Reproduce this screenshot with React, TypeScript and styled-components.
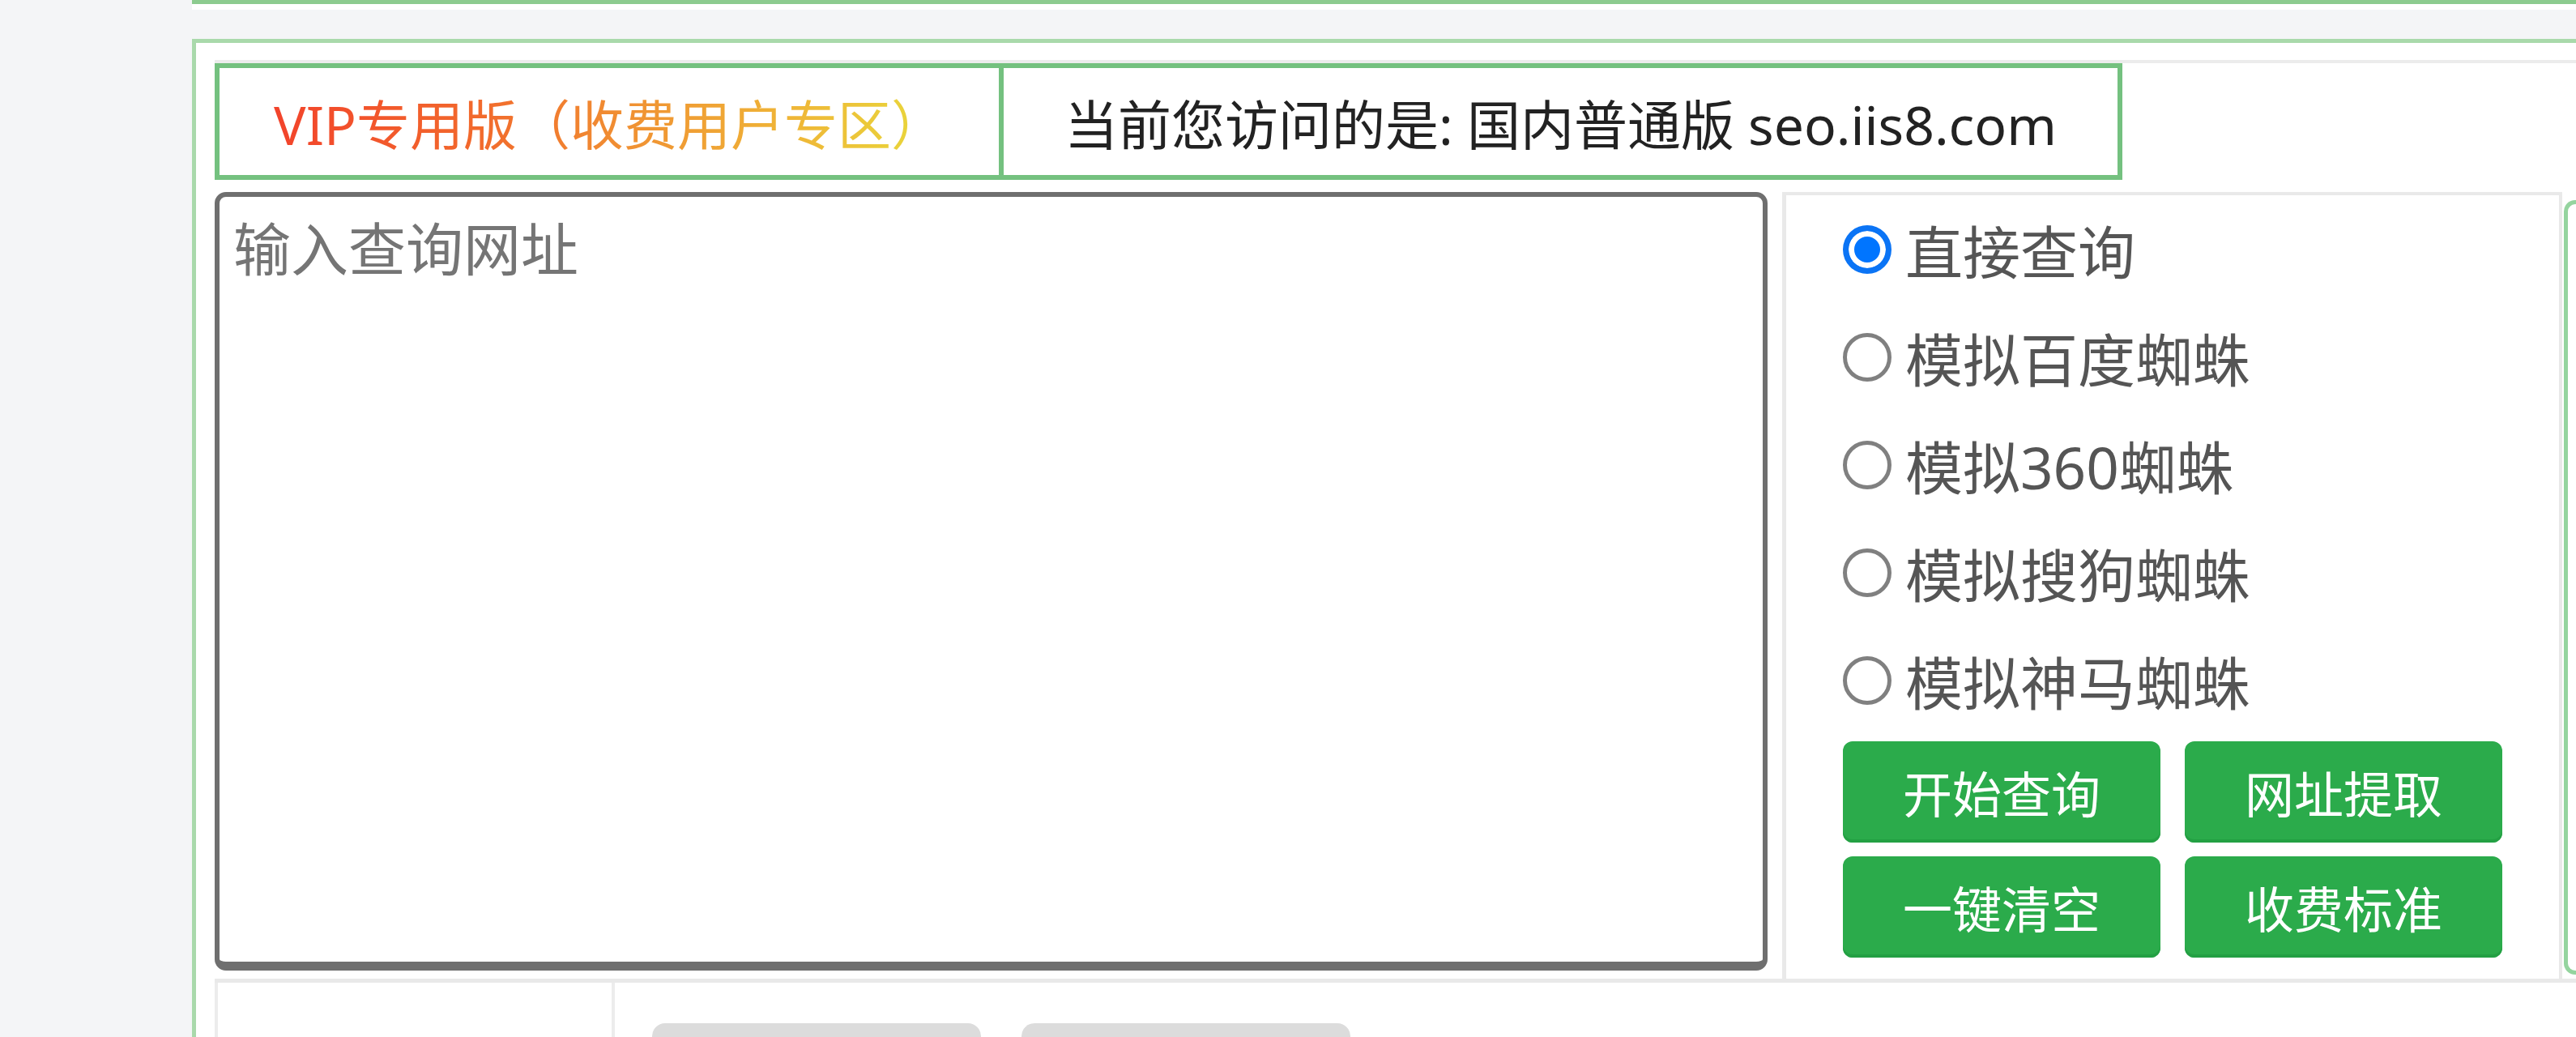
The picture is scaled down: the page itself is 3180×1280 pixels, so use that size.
import React from 'react';
import styled, { createGlobalStyle } from 'styled-components';

const GlobalStyle = createGlobalStyle`
  html, body {
    margin: 0;
    padding: 0;
    background: #f4f5f7;
  }
  body {
    font-family: "Noto Sans", "Noto Sans CJK SC", sans-serif;
    overflow: hidden;
  }
  * {
    box-sizing: border-box;
  }
`;

const Page = styled.div`
  display: flex;
  width: 3180px;
  height: 1280px;
  overflow: hidden;
`;

const Sidebar = styled.aside`
  width: 237px;
  flex-shrink: 0;
`;

const Main = styled.main`
  flex: 1;
  min-width: 0;
`;

const PrevBox = styled.div`
  height: 12px;
  background: #fff;
  border-top: 5px solid #8ccb8f;
`;

const Box = styled.section`
  margin-top: 36px;
  background: #fff;
  border-top: 5px solid #a9d9ab;
  border-left: 5px solid #a9d9ab;
  padding: 21px 0 0 23px;
  height: 1300px;
`;

const TabRow = styled.div`
  display: flex;
  border-top: 4px solid #ececec;
  padding-bottom: 15px;
`;

const Tab = styled.div<{ $width: number; $first?: boolean }>`
  width: ${p => p.$width}px;
  height: 144px;
  border: 6px solid #74c17f;
  border-left-width: ${p => (p.$first ? '6px' : '0')};
  display: flex;
  align-items: center;
  justify-content: center;
  font-size: 66px;
  color: #222;
  white-space: nowrap;
`;

const VipText = styled.span`
  background: linear-gradient(90deg, #f2432b 0%, #f2692c 30%, #f09433 55%, #efb737 78%, #e8dc3c 100%);
  -webkit-background-clip: text;
  background-clip: text;
  color: transparent;
`;

const ContentRow = styled.div`
  display: grid;
  grid-template-columns: 1935px 963px 1fr;
  border-bottom: 5px solid #e9e9e9;
`;

const QueryInput = styled.textarea`
  display: block;
  width: 1917px;
  height: 961px;
  border-style: solid;
  border-color: #6f6f6f;
  border-width: 6px 6px 11px 6px;
  border-radius: 14px;
  padding: 14px 17px;
  font-family: "Noto Sans", "Noto Sans CJK SC", sans-serif;
  font-size: 71px;
  line-height: 1.4;
  color: #333;
  resize: none;
  outline: none;
  &::placeholder {
    color: #757575;
  }
`;

const OptionsCell = styled.div`
  border-left: 5px solid #e9e9e9;
  border-right: 4px solid #e9e9e9;
  border-top: 4px solid #e9e9e9;
  padding: 0 0 26px 70px;
`;

const Option = styled.label`
  display: flex;
  align-items: center;
  height: 133px;
  font-size: 71px;
  color: #555;
  cursor: pointer;
`;

const Radio = styled.span<{ $checked?: boolean }>`
  width: 60px;
  height: 60px;
  flex-shrink: 0;
  border-radius: 50%;
  margin-right: 17px;
  border: ${p => (p.$checked ? '7px solid #0b74f5' : '5px solid #808080')};
  background: ${p => (p.$checked ? '#0075ff' : '#fff')};
  box-shadow: ${p => (p.$checked ? 'inset 0 0 0 7px #fff' : 'none')};
`;

const ButtonGrid = styled.div`
  display: grid;
  grid-template-columns: 392px 392px;
  gap: 17px 30px;
  margin-top: 9px;
`;

const ActionButton = styled.button`
  height: 125px;
  border: none;
  border-radius: 12px;
  background: #2bab4b;
  box-shadow: inset 0 -4px 0 #23a043;
  color: #fff;
  font-family: "Noto Sans", "Noto Sans CJK SC", sans-serif;
  font-size: 61px;
  padding: 0;
  cursor: pointer;
`;

const SideBox = styled.div`
  margin: 10px 0 0 2px;
  height: 956px;
  border: 5px solid #95d49f;
  border-right: none;
  border-radius: 14px 0 0 14px;
`;

const FilterRow = styled.div`
  display: grid;
  grid-template-columns: 494px 1fr;
  height: 100px;
`;

const FilterLabel = styled.div`
  border-left: 4px solid #ececec;
  border-right: 4px solid #ececec;
`;

const FilterButtons = styled.div`
  display: flex;
  gap: 50px;
  padding: 50px 0 0 46px;
`;

const GhostButton = styled.div`
  width: 406px;
  height: 120px;
  border-radius: 16px;
  background: #dcdcdc;
`;

const options = ['直接查询', '模拟百度蜘蛛', '模拟360蜘蛛', '模拟搜狗蜘蛛', '模拟神马蜘蛛'];
const actions = ['开始查询', '网址提取', '一键清空', '收费标准'];

export default function App() {
  return (
    <>
      <GlobalStyle />
      <Page>
        <Sidebar />
        <Main>
          <PrevBox />
          <Box>
            <TabRow>
              <Tab $width={974} $first>
                <VipText>VIP专用版（收费用户专区）</VipText>
              </Tab>
              <Tab $width={1381}>当前您访问的是: 国内普通版 seo.iis8.com</Tab>
            </TabRow>
            <ContentRow>
              <div>
                <QueryInput placeholder="输入查询网址" />
              </div>
              <OptionsCell>
                {options.map((o, i) => (
                  <Option key={o}>
                    <Radio $checked={i === 0} />
                    {o}
                  </Option>
                ))}
                <ButtonGrid>
                  {actions.map(a => (
                    <ActionButton key={a}>{a}</ActionButton>
                  ))}
                </ButtonGrid>
              </OptionsCell>
              <SideBox />
            </ContentRow>
            <FilterRow>
              <FilterLabel />
              <FilterButtons>
                <GhostButton />
                <GhostButton />
              </FilterButtons>
            </FilterRow>
          </Box>
        </Main>
      </Page>
    </>
  );
}
